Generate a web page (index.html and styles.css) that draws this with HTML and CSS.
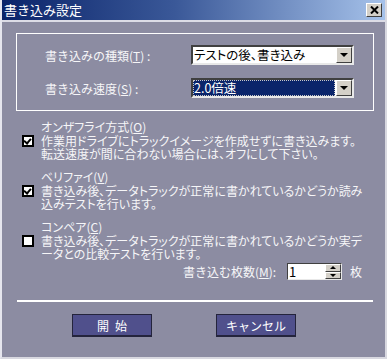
FILE: index.html
```html
<!DOCTYPE html>
<html lang="ja">
<head>
    <meta charset="UTF-8">
    <title>書き込み設定</title>
    <link rel="stylesheet" href="styles.css">
</head>
<body>
    <div class="window">
        <div class="titlebar">
            <span class="title">書き込み設定</span>
            <span class="close">
                <svg width="9" height="8" viewBox="0 0 9 8"><path d="M1 0.5 L8 7.5 M8 0.5 L1 7.5" stroke="#000" stroke-width="2"/></svg>
            </span>
        </div>

        <div class="content">
            <!-- 種類と速度 -->
            <div class="group">
                <div class="field">
                    <span class="label">書き込みの種類(<u>T</u>) :</span>
                    <div class="combo">
                        <span class="value">テストの後、書き込み</span>
                        <span class="drop"><span class="arrow"></span></span>
                    </div>
                </div>
                <div class="field">
                    <span class="label">書き込み速度(<u>S</u>) :</span>
                    <div class="combo">
                        <span class="value selected">2.0倍速</span>
                        <span class="drop"><span class="arrow"></span></span>
                    </div>
                </div>
            </div>

            <div class="options">
                <div class="option">
                    <span class="opt-title">オンザフライ方式(<u>O</u>)</span>
                    <span class="check on"></span>
                    <span class="opt-desc">作業用ドライブにトラックイメージを作成せずに書き込みます。<br>転送速度が間に合わない場合には、オフにして下さい。</span>
                </div>
                <div class="option">
                    <span class="opt-title">ベリファイ(<u>V</u>)</span>
                    <span class="check on"></span>
                    <span class="opt-desc">書き込み後、データトラックが正常に書かれているかどうか読み<br>込みテストを行います。</span>
                </div>
                <div class="option">
                    <span class="opt-title">コンペア(<u>C</u>)</span>
                    <span class="check"></span>
                    <span class="opt-desc">書き込み後、データトラックが正常に書かれているかどうか実デ<br>ータとの比較テストを行います。</span>
                </div>
            </div>

            <div class="copies">
                <span class="label">書き込む枚数(<u>M</u>):</span>
                <div class="spin">
                    <span class="value">1</span>
                    <span class="spin-btns">
                        <span class="spin-btn"><span class="up"></span></span>
                        <span class="spin-btn"><span class="down"></span></span>
                    </span>
                </div>
                <span class="unit">枚</span>
            </div>

            <div class="sep"></div>

            <div class="buttons">
                <button class="btn">開&ensp;始</button>
                <button class="btn">キャンセル</button>
            </div>
        </div>
    </div>
</body>
</html>
```

FILE: styles.css
```css
body {
    margin: 0;
    padding: 0;
    background: #8c8ca2;
    font-family: "Noto Sans CJK JP", "DejaVu Sans", sans-serif;
    font-size: 12px;
    color: #f6f6f8;
}
.window {
    width: 387px;
    height: 359px;
    box-sizing: border-box;
    border-left: 2px solid #e6e6ee;
    border-right: 2px solid #d8d8e0;
    border-bottom: 2px solid #d8d8e0;
    background: #8c8ca2;
}
.titlebar {
    height: 20px;
    display: flex;
    align-items: center;
    justify-content: space-between;
    padding: 0 3px 0 2px;
    background: linear-gradient(to right, #0a246a, #3a5898 45%, #a6c2ea);
    border-bottom: 2px solid #dcdce6;
}
.title {
    color: #fff;
    font-size: 13px;
    line-height: 20px;
}
.close {
    width: 16px;
    height: 14px;
    display: flex;
    align-items: center;
    justify-content: center;
    background: #d4d0c8;
    border: 1px solid;
    border-color: #fff #404040 #404040 #fff;
    box-sizing: border-box;
}
.content {
    padding: 11px 11px 0 14px;
}
.group {
    height: 78px;
    box-sizing: border-box;
    border: 1px solid #fff;
    padding: 11px 0 0 28px;
    display: flex;
    flex-direction: column;
    gap: 13px;
}
.field {
    display: flex;
    align-items: center;
}
.field .label {
    width: 146px;
    white-space: nowrap;
}
.combo {
    width: 163px;
    height: 20px;
    box-sizing: border-box;
    background: #fff;
    border: 2px solid;
    border-color: #404040 #e8e8e8 #e8e8e8 #404040;
    display: flex;
    align-items: center;
    color: #000;
}
.combo .value {
    flex: 1;
    height: 16px;
    line-height: 16px;
    padding-left: 1px;
    white-space: nowrap;
    font-size: 12.5px;
    font-feature-settings: "palt";
}
.combo .value.selected {
    background: #0a246a;
    color: #fff;
    outline: 1px dotted #c8c8c8;
    outline-offset: -1px;
    margin-right: 1px;
}
.drop {
    width: 16px;
    height: 16px;
    box-sizing: border-box;
    background: #d4d0c8;
    border: 1px solid;
    border-color: #fff #404040 #404040 #fff;
    display: flex;
    align-items: center;
    justify-content: center;
}
.arrow {
    width: 0;
    height: 0;
    border-left: 4px solid transparent;
    border-right: 4px solid transparent;
    border-top: 4px solid #000;
}
.options {
    margin-top: 10px;
    padding-left: 6px;
    display: flex;
    flex-direction: column;
    gap: 11px;
}
.option {
    display: grid;
    grid-template-columns: 19px 1fr;
    white-space: nowrap;
    font-feature-settings: "palt";
}
.opt-title {
    grid-column: 2;
    line-height: 12px;
    margin-bottom: 1px;
}
.opt-desc {
    grid-column: 2;
    line-height: 13px;
}
.check {
    grid-column: 1;
    grid-row: 2;
    width: 12px;
    height: 12px;
    box-sizing: border-box;
    margin-top: 1px;
    background: #fff;
    border: 2px solid #000;
    position: relative;
}
.check.on::after {
    content: "";
    position: absolute;
    left: 1px;
    top: 0;
    width: 3px;
    height: 5px;
    border: solid #000;
    border-width: 0 2px 2px 0;
    transform: rotate(40deg);
}
.copies {
    margin-top: 3px;
    height: 17px;
    display: flex;
    align-items: center;
    padding-left: 167px;
}
.copies .label {
    width: 104px;
    white-space: nowrap;
}
.spin {
    width: 55px;
    height: 17px;
    box-sizing: border-box;
    background: #fff;
    border: 1px solid;
    border-color: #404040 #e8e8e8 #e8e8e8 #404040;
    display: flex;
    color: #000;
}
.spin .value {
    flex: 1;
    line-height: 15px;
    font-size: 13px;
    padding-left: 1px;
}
.spin-btns {
    width: 16px;
    display: flex;
    flex-direction: column;
}
.spin-btn {
    flex: 1;
    background: #d4d0c8;
    border: 1px solid;
    border-color: #fff #404040 #404040 #fff;
    display: flex;
    align-items: center;
    justify-content: center;
}
.up, .down {
    width: 0;
    height: 0;
    border-left: 3px solid transparent;
    border-right: 3px solid transparent;
}
.up {
    border-bottom: 3px solid #000;
}
.down {
    border-top: 3px solid #000;
}
.unit {
    margin-left: 8px;
}
.sep {
    margin-top: 20px;
    height: 2px;
    background: #fff;
    margin-right: 1px;
    margin-left: 1px;
}
.buttons {
    margin-top: 12px;
    display: flex;
    gap: 64px;
    padding-left: 56px;
}
.btn {
    width: 80px;
    height: 23px;
    background: #50508c;
    color: #fff;
    font-family: "Noto Sans CJK JP", "DejaVu Sans", sans-serif;
    font-size: 12px;
    border: 1px solid #24243c;
    border-bottom-width: 2px;
    padding: 0;
}
```
